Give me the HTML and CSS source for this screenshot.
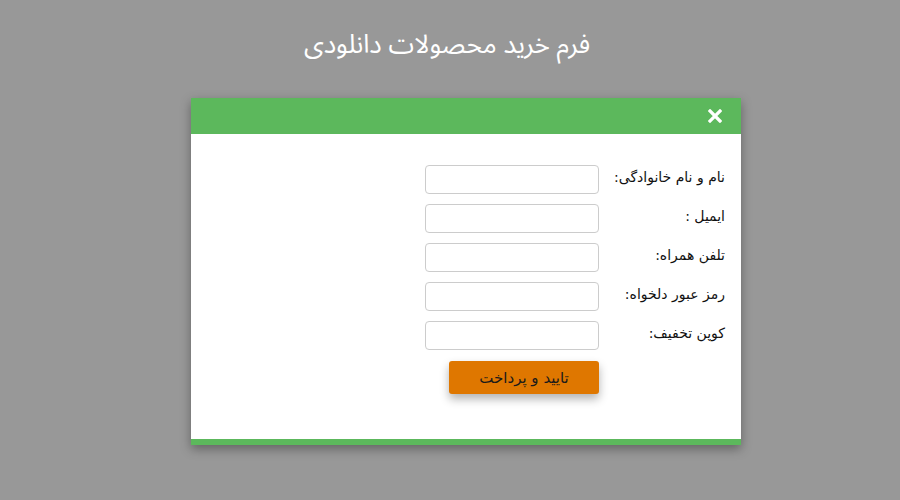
FILE: index.html
```html
<!DOCTYPE html>
<html lang="fa" dir="rtl">

<head>
    <meta charset="UTF-8">
    <meta name="viewport" content="width=device-width, initial-scale=1.0">
    <title>فرم خرید</title>
    <link rel="stylesheet" href="styles.css">
</head>

<body>
    <main class="page">
        <h1 class="page-title">فرم خرید محصولات دانلودی</h1>

        <section class="modal">
            <header class="modal-header">
                <button class="modal-close" type="button" aria-label="بستن">
                    <svg width="14" height="14" viewBox="0 0 14 14">
                        <path d="M2 2 L12 12 M12 2 L2 12" stroke="#fff" stroke-width="3.2" stroke-linecap="square" />
                    </svg>
                </button>
            </header>

            <form class="buy-form">
                <div class="form-row">
                    <label class="form-label" for="name">نام و نام خانوادگی:</label>
                    <input class="form-input" id="name" type="text">
                </div>
                <div class="form-row">
                    <label class="form-label" for="email">ایمیل :</label>
                    <input class="form-input" id="email" type="email">
                </div>
                <div class="form-row">
                    <label class="form-label" for="phone">تلفن همراه:</label>
                    <input class="form-input" id="phone" type="tel">
                </div>
                <div class="form-row">
                    <label class="form-label" for="pass">رمز عبور دلخواه:</label>
                    <input class="form-input" id="pass" type="password">
                </div>
                <div class="form-row">
                    <label class="form-label" for="coupon">کوپن تخفیف:</label>
                    <input class="form-input" id="coupon" type="text">
                </div>
                <div class="form-actions">
                    <button class="submit-btn" type="submit">تایید و پرداخت</button>
                </div>
            </form>

            <footer class="modal-footer"></footer>
        </section>
    </main>
</body>

</html>
```

FILE: styles.css
```css
html {
    box-sizing: border-box;
}

*,
*::before,
*::after {
    box-sizing: inherit;
    margin: 0;
    padding: 0;
}

:root {
    --bg-color: #989898;
    --green: #5cb85c;
    --orange: #df7700;
    --border-color: #cccccc;
}

body {
    background-color: var(--bg-color);
    font-family: 'DejaVu Sans', sans-serif;
    height: 500px;
    overflow: hidden;
}

.page {
    display: flex;
    flex-direction: column;
    align-items: center;
    padding-top: 28px;
}

.page-title {
    color: #fff;
    font-family: 'Noto Sans Arabic', 'DejaVu Sans', sans-serif;
    font-weight: normal;
    font-size: 26px;
    line-height: 34px;
    margin-bottom: 36px;
    margin-right: 6px;
}

.modal {
    width: 550px;
    margin-left: 32px;
    background-color: #fff;
    box-shadow: 0 4px 10px rgba(0, 0, 0, 0.35);
}

.modal-header {
    height: 36px;
    background-color: var(--green);
    display: flex;
    align-items: center;
    padding-right: 19px;
}

.modal-close {
    background: none;
    border: none;
    display: flex;
    cursor: pointer;
}

.buy-form {
    padding: 31px 16px 45px 0;
    display: flex;
    flex-direction: column;
    gap: 10px;
}

.form-row {
    display: flex;
    align-items: center;
    gap: 16px;
}

.form-label {
    width: 110px;
    font-size: 14px;
    color: #111;
    white-space: nowrap;
    margin-bottom: 6px;
}

.form-input {
    width: 174px;
    height: 29px;
    border: 1px solid var(--border-color);
    border-radius: 4px;
    background: #fff;
}

.form-actions {
    display: flex;
    padding-right: 126px;
    margin-top: 1px;
}

.submit-btn {
    width: 150px;
    height: 33px;
    background-color: var(--orange);
    border: none;
    border-radius: 3px;
    font-family: 'DejaVu Sans', sans-serif;
    font-size: 15px;
    color: #1a1a1a;
    box-shadow: 0 5px 10px rgba(0, 0, 0, 0.3);
}

.modal-footer {
    height: 6px;
    background-color: var(--green);
}
```
